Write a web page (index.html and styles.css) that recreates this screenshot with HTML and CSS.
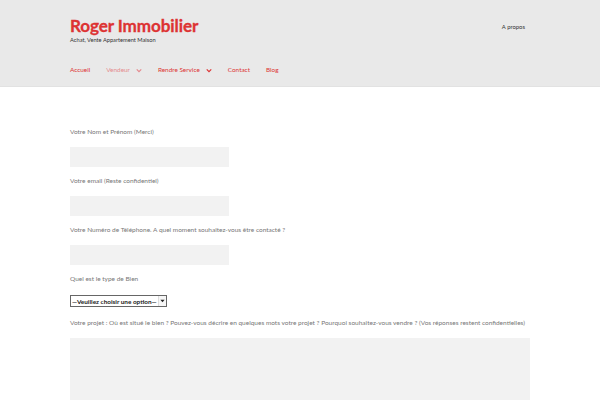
FILE: index.html
```html
<!DOCTYPE html>
<html lang="fr">
<head>
<meta charset="utf-8">
<title>Roger Immobilier</title>
<link rel="stylesheet" href="styles.css">
</head>
<body>
<header class="site-header">
  <div class="header-inner">
    <div class="branding-row">
      <div class="branding">
        <div class="site-title">Roger Immobilier</div>
        <div class="site-desc">Achat, Vente Appartement Maison</div>
      </div>
      <div class="secondary-nav">A propos</div>
    </div>
    <nav class="main-nav">
      <a class="nav-item">Accueil</a>
      <a class="nav-item active">Vendeur <svg class="caret" viewBox="0 0 8 6" width="6" height="5"><path d="M1 1.5 L4 4.5 L7 1.5" fill="none" stroke="currentColor" stroke-width="1.6"/></svg></a>
      <a class="nav-item">Rendre Service <svg class="caret" viewBox="0 0 8 6" width="6" height="5"><path d="M1 1.5 L4 4.5 L7 1.5" fill="none" stroke="currentColor" stroke-width="1.6"/></svg></a>
      <a class="nav-item">Contact</a>
      <a class="nav-item">Blog</a>
    </nav>
  </div>
</header>
<main class="content">
  <form class="form">
    <div class="field">
      <label class="label">Votre Nom et Prénom (Merci)</label>
      <div class="input"></div>
    </div>
    <div class="field">
      <label class="label">Votre email (Reste confidentiel)</label>
      <div class="input"></div>
    </div>
    <div class="field">
      <label class="label">Votre Numéro de Téléphone. A quel moment souhaitez-vous être contacté ?</label>
      <div class="input"></div>
    </div>
    <div class="field field-select">
      <label class="label">Quel est le type de Bien</label>
      <div class="select"><span class="select-text">—Veuillez choisir une option—</span><span class="select-btn"><svg viewBox="0 0 6 4" width="5" height="4"><path d="M0.5 0.5 L5.5 0.5 L3 3.5 Z" fill="#222"/></svg></span></div>
    </div>
    <div class="field">
      <label class="label">Votre projet : Où est situé le bien ? Pouvez-vous décrire en quelques mots votre projet ? Pourquoi souhaitez-vous vendre ? (Vos réponses restent confidentielles)</label>
      <div class="textarea"></div>
    </div>
  </form>
</main>
</body>
</html>
```
FILE: styles.css
```css
* { box-sizing: border-box; }
html, body { margin: 0; padding: 0; background: #fff; }
body { font-family: "Source Sans Pro", Lato, "Open Sans", sans-serif; color: #6d6d6d; overflow: hidden; }

.site-header {
  background: #e9e9e9;
  height: 87px;
  border-bottom: 1px solid #e2e2e2;
}
.header-inner { padding: 0 70px; }
.branding-row { display: flex; justify-content: space-between; padding-top: 15px; }
.site-title { color: #d33; font-weight: 700; font-size: 17.1px; line-height: 21px; letter-spacing: -0.1px; -webkit-text-stroke: 0.3px #d33; }
.site-desc { color: #333; font-size: 5.7px; line-height: 8px; margin-top: 0; }
.secondary-nav { color: #333; font-size: 5.9px; line-height: 8px; margin-top: 8px; margin-right: 5px; }

.main-nav { display: flex; gap: 16px; margin-top: 21px; font-size: 6.4px; line-height: 10px; }
.nav-item { color: #d33; display: flex; align-items: center; gap: 6px; }
.nav-item.active { color: #e5898d; }
.caret { display: block; }

.content { padding: 39px 70px 0; }
.field { display: flex; flex-direction: column; }
.label { font-size: 6.5px; line-height: 12px; color: #777; margin-bottom: 9px; white-space: nowrap; }
.input { width: 159px; height: 20px; background: #f2f2f2; margin-bottom: 8px; }
.field-select .label { margin-bottom: 10px; }
.select {
  width: 97px; height: 12px; border: 1px solid #666; background: #fff;
  display: flex; align-items: center; margin-bottom: 10px;
}
.select-text { flex: 1; font-family: Lato, sans-serif; font-size: 6.4px; color: #222; padding-left: 1px; white-space: nowrap; overflow: hidden; font-weight: 700; }
.select-btn { width: 8px; height: 100%; border-left: 1px solid #ddd; display: flex; align-items: center; justify-content: center; background: #f6f6f6; }
.select-btn svg { display: block; }
.textarea { width: 460px; height: 120px; background: #f2f2f2; }
```
